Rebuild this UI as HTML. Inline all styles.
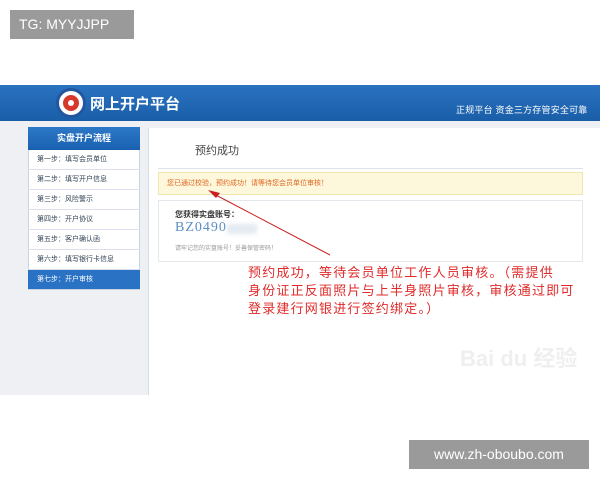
<!DOCTYPE html>
<html><head><meta charset="utf-8"><style>
*{margin:0;padding:0;box-sizing:border-box}
body{width:600px;height:480px;background:#fff;position:relative;overflow:hidden;font-family:"Liberation Sans","Noto Sans CJK SC",sans-serif}
.a{position:absolute}
</style></head><body>
<div class="a" style="left:0;top:85px;width:600px;height:310px;background:#eef0f3"></div>
<div class="a" style="left:0;top:85px;width:600px;height:36px;background:linear-gradient(#2a72c0,#1a5ea8)"></div>
<div class="a" style="left:56px;top:88px;width:30px;height:30px;border-radius:50%;background:#fff;border:3px solid #2456a0"></div>
<div class="a" style="left:63px;top:95px;width:16px;height:16px;border-radius:50%;background:#d8382c"></div>
<div class="a" style="left:68px;top:100px;width:6px;height:6px;border-radius:50%;background:#fff"></div>
<div class="a" style="left:90px;top:93px;color:#fff;font-size:15px;font-weight:bold">网上开户平台</div>
<div class="a" style="left:456px;top:103px;color:#fff;font-size:9px;letter-spacing:0.2px">正规平台 资金三方存管安全可靠</div>
<div class="a" style="left:28px;top:127px;width:112px;height:163px;background:#fff;border:1px solid #c8d4e2"></div>
<div class="a" style="left:28px;top:127px;width:112px;height:23px;background:linear-gradient(#2d78c8,#1a60b0);color:#fff;font-size:9px;text-align:center;line-height:23px;font-weight:bold">实盘开户流程</div>
<div class="a" style="left:28px;top:150px;width:112px;font-size:7px;color:#345">
<div style="height:20px;line-height:20px;padding-left:9px;border-bottom:1px solid #dde">第一步：填写会员单位</div>
<div style="height:20px;line-height:20px;padding-left:9px;border-bottom:1px solid #dde">第二步：填写开户信息</div>
<div style="height:20px;line-height:20px;padding-left:9px;border-bottom:1px solid #dde">第三步：风险警示</div>
<div style="height:20px;line-height:20px;padding-left:9px;border-bottom:1px solid #dde">第四步：开户协议</div>
<div style="height:20px;line-height:20px;padding-left:9px;border-bottom:1px solid #dde">第五步：客户确认函</div>
<div style="height:20px;line-height:20px;padding-left:9px;border-bottom:1px solid #dde">第六步：填写银行卡信息</div>
<div style="height:19px;line-height:19px;padding-left:9px;background:#2a72c4;color:#fff">第七步：开户审核</div>
</div>
<div class="a" style="left:148px;top:128px;width:452px;height:267px;background:#fff;border-left:1px solid #d6dce4"></div>
<div class="a" style="left:195px;top:142px;font-size:11px;color:#444">预约成功</div>
<div class="a" style="left:158px;top:168px;width:425px;height:1px;background:#dde2e8"></div>
<div class="a" style="left:158px;top:172px;width:425px;height:23px;background:#fdf8dc;border:1px solid #f0e6b0;font-size:7px;color:#e0641e;line-height:21px;padding-left:8px">您已通过校验，预约成功！请等待您会员单位审核！</div>
<div class="a" style="left:158px;top:200px;width:425px;height:62px;border:1px solid #e4e8ec"></div>
<div class="a" style="left:175px;top:209px;font-size:8px;color:#333;font-weight:bold">您获得实盘账号：</div>
<div class="a" style="left:175px;top:220px;font-size:14px;color:#5a8ec4;font-family:'Liberation Serif',serif;letter-spacing:1px">BZ0490</div>
<div class="a" style="left:227px;top:224px;width:30px;height:10px;background:#e4eaf2;filter:blur(2px)"></div>
<div class="a" style="left:175px;top:243px;font-size:6px;color:#999">请牢记您的实盘账号！妥善保管密码！</div>
<svg class="a" style="left:0;top:0" width="600" height="480"><line x1="330" y1="255" x2="212" y2="193" stroke="#c82020" stroke-width="1"/><polygon points="208,190 220,193 216,198" fill="#c82020"/></svg>
<div class="a" style="left:248px;top:264px;font-size:13px;line-height:18px;color:#e02a2a;white-space:nowrap;letter-spacing:1.2px">预约成功，等待会员单位工作人员审核。（需提供<br>身份证正反面照片与上半身照片审核，审核通过即可<br>登录建行网银进行签约绑定。）</div>
<div class="a" style="left:460px;top:341px;font-size:22px;color:#efefef;font-weight:bold">Bai du 经验</div>
<div class="a" style="left:10px;top:10px;width:124px;height:29px;background:#9a9a9a;color:#fff;font-size:14px;line-height:29px;padding-left:9px">TG: MYYJJPP</div>
<div class="a" style="left:409px;top:440px;width:180px;height:29px;background:#9a9a9a;color:#fff;font-size:14px;line-height:29px;text-align:center">www.zh-oboubo.com</div>
</body></html>
